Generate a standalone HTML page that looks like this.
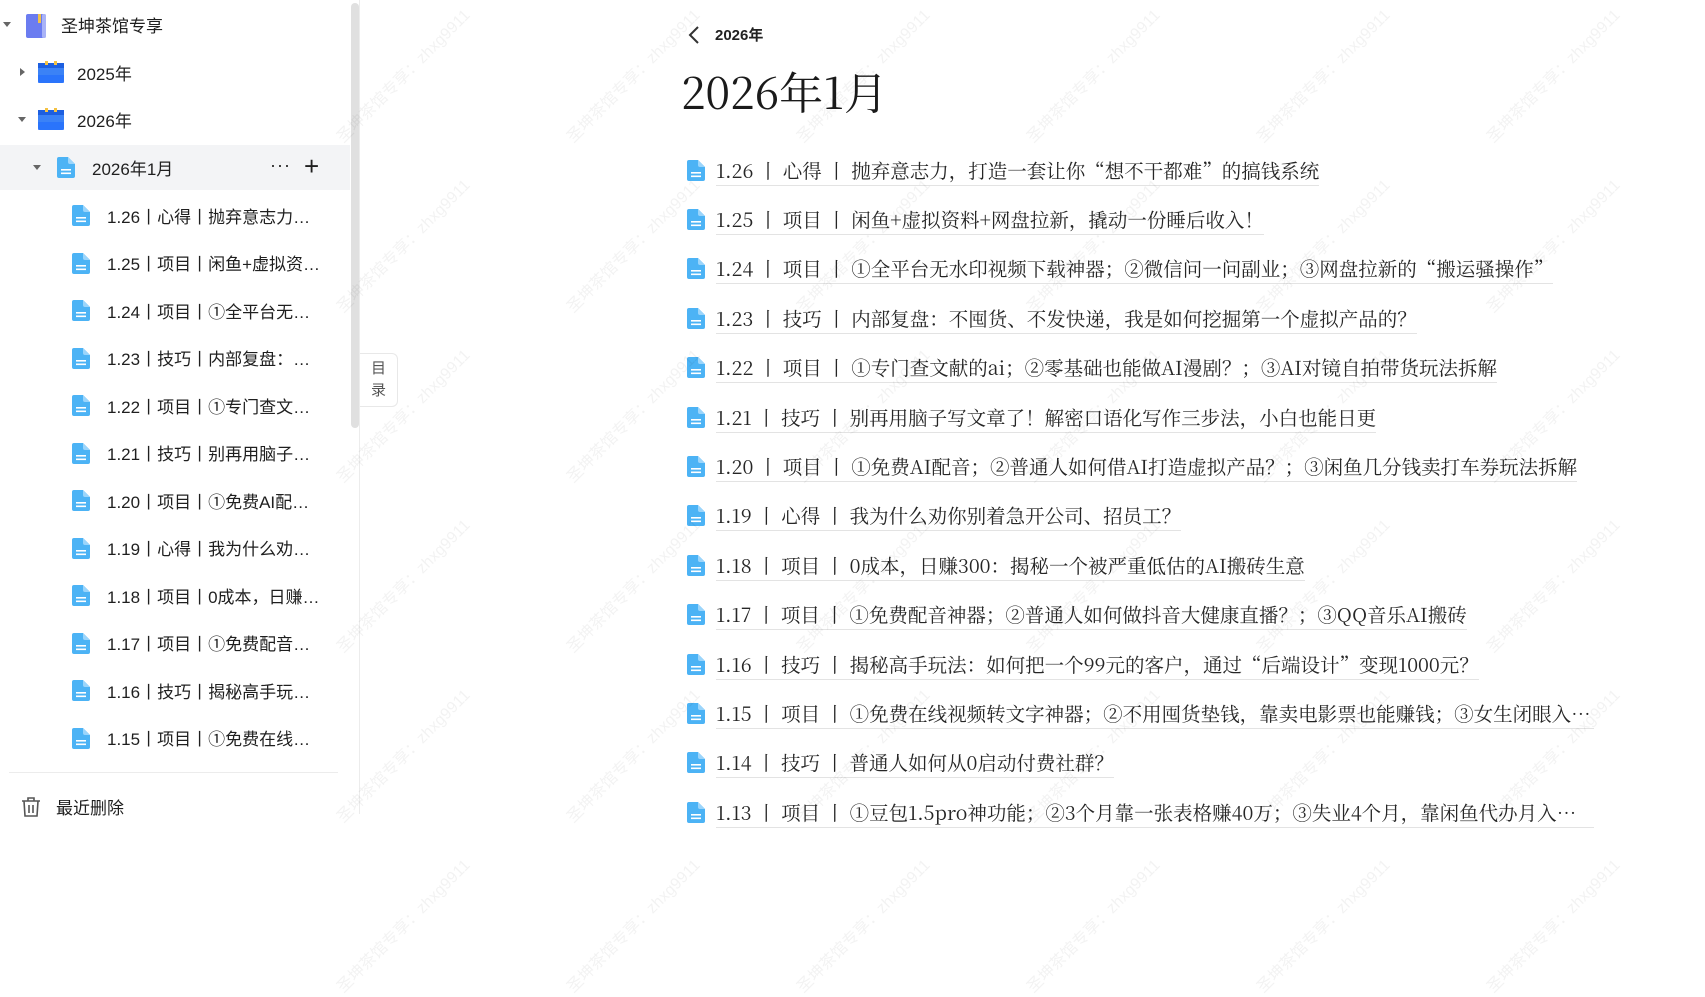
<!DOCTYPE html>
<html><head><meta charset="utf-8"><style>
*{margin:0;padding:0;box-sizing:border-box}
body{width:1705px;height:814px;overflow:hidden;background:#fff;position:relative;font-family:"Liberation Sans","Noto Sans CJK SC",sans-serif;color:#1f1f1f}
.side{position:absolute;left:0;top:0;width:360px;height:814px;border-right:1px solid #ececec}
.row{position:absolute;left:0;width:350px;height:46px;display:flex;align-items:center;font-size:17px;white-space:nowrap}
.row.hl{background:#f3f4f6}
.tri{position:absolute;width:0;height:0}
.down{border-left:4px solid transparent;border-right:4px solid transparent;border-top:5px solid #666}
.right{border-top:4px solid transparent;border-bottom:4px solid transparent;border-left:5px solid #666}
.sb{position:absolute;left:351px;top:3px;width:8px;height:425px;background:#e0e0e0;border-radius:4px}
.mulu{position:absolute;left:360px;top:353px;width:38px;height:54px;border:1px solid #e8e8e8;border-left:none;border-radius:0 6px 6px 0;background:#fff;font-size:15px;color:#555;text-align:center;line-height:22px;padding-top:4px}
.main .item{position:absolute;left:687px;height:30px;display:flex;align-items:center}
.main .txt{margin-left:11px;font-family:"Noto Serif CJK SC","Liberation Serif",serif;font-size:19.5px;color:#262626;border-bottom:1px solid #e3e3e3;line-height:30px;white-space:nowrap;max-width:878px;overflow:hidden;text-overflow:ellipsis}
.wm{position:absolute;font-size:16px;color:rgba(0,0,0,0.05);transform:rotate(-45deg);white-space:nowrap;transform-origin:left top}
</style></head><body>
<div class="side">
  <div class="row" style="top:1px"><div class="tri down" style="left:3px;top:21px"></div>
    <svg style="position:absolute;left:26px;top:13px" width="21" height="24" viewBox="0 0 21 24"><rect x="0" y="0" width="19" height="24" rx="2" fill="#6b7cf0"/><rect x="16" y="0" width="4" height="24" rx="1.5" fill="#a9b3f7"/><rect x="12" y="0" width="3" height="9" fill="#f3c24a"/></svg>
    <span style="position:absolute;left:61px">圣坤茶馆专享</span></div>
  <div class="row" style="top:49px"><div class="tri right" style="left:20px;top:19px"></div>
    <svg style="position:absolute;left:38px;top:12px" width="26" height="22" viewBox="0 0 26 22"><rect x="0" y="2" width="26" height="20" rx="2" fill="#3b82f6"/><rect x="0" y="2" width="26" height="5" fill="#1d5fe0"/><rect x="7" y="0" width="3" height="4" fill="#f5c242"/><rect x="16" y="0" width="3" height="4" fill="#f5c242"/><rect x="0" y="14" width="26" height="8" fill="#1a66ff" opacity=".5"/></svg>
    <span style="position:absolute;left:77px">2025年</span></div>
  <div class="row" style="top:96px"><div class="tri down" style="left:18px;top:21px"></div>
    <svg style="position:absolute;left:38px;top:12px" width="26" height="22" viewBox="0 0 26 22"><rect x="0" y="2" width="26" height="20" rx="2" fill="#3b82f6"/><rect x="0" y="2" width="26" height="5" fill="#1d5fe0"/><rect x="7" y="0" width="3" height="4" fill="#f5c242"/><rect x="16" y="0" width="3" height="4" fill="#f5c242"/><rect x="0" y="14" width="26" height="8" fill="#1a66ff" opacity=".5"/></svg>
    <span style="position:absolute;left:77px">2026年</span></div>
  <div class="row hl" style="top:145px;height:45px"><div class="tri down" style="left:33px;top:20px"></div>
    <svg style="position:absolute;left:57px;top:12px" width="18" height="21" viewBox="0 0 18 21"><path d="M2 0h9l7 7v12a2 2 0 0 1-2 2H2a2 2 0 0 1-2-2V2a2 2 0 0 1 2-2z" fill="#4cb3f5"/><path d="M11 0l7 7h-5a2 2 0 0 1-2-2z" fill="#9bd5fb"/><rect x="4" y="12" width="10" height="1.6" fill="#fff"/><rect x="4" y="15.5" width="10" height="1.6" fill="#fff"/></svg>
    <span style="position:absolute;left:92px">2026年1月</span>
    <span style="position:absolute;left:270px;top:10px;font-size:18px;letter-spacing:1px">···</span>
    <span style="position:absolute;left:304px;top:6px;font-size:26px;font-weight:300">+</span></div>
  <div id="kids"></div>
  <div style="position:absolute;left:9px;top:772px;width:329px;height:1px;background:#ececec"></div>
  <svg style="position:absolute;left:21px;top:797px" width="20" height="20" viewBox="0 0 20 20" fill="none" stroke="#555" stroke-width="1.6"><path d="M1 4h18M7 4V1h6v3M3 4l1 15h12l1-15M8 8v8M12 8v8"/></svg>
  <span style="position:absolute;left:56px;top:794px;font-size:17px">最近删除</span>
  <div class="sb"></div>
</div>
<div class="mulu">目<br>录</div>
<div class="main">
  <svg style="position:absolute;left:688px;top:25px" width="12" height="20" viewBox="0 0 12 20"><path d="M10 2L2 10l8 8" fill="none" stroke="#333" stroke-width="2"/></svg>
  <div style="position:absolute;left:715px;top:24px;font-size:15px;font-weight:bold;color:#222">2026年</div>
  <div style="position:absolute;left:681px;top:62px;font-size:44px;font-family:'Noto Serif CJK SC','Liberation Serif',serif;color:#1a1a1a;line-height:56px">2026年1月</div>
  <div id="list"></div>
</div>
<div id="wms"></div>
<script>
var doc='<svg width="18" height="21" viewBox="0 0 18 21"><path d="M2 0h9l7 7v12a2 2 0 0 1-2 2H2a2 2 0 0 1-2-2V2a2 2 0 0 1 2-2z" fill="#4cb3f5"/><path d="M11 0l7 7h-5a2 2 0 0 1-2-2z" fill="#9bd5fb"/><rect x="4" y="12" width="10" height="1.6" fill="#fff"/><rect x="4" y="15.5" width="10" height="1.6" fill="#fff"/></svg>';
var kids=["1.26丨心得丨抛弃意志力…","1.25丨项目丨闲鱼+虚拟资…","1.24丨项目丨①全平台无…","1.23丨技巧丨内部复盘：…","1.22丨项目丨①专门查文…","1.21丨技巧丨别再用脑子…","1.20丨项目丨①免费AI配…","1.19丨心得丨我为什么劝…","1.18丨项目丨0成本，日赚…","1.17丨项目丨①免费配音…","1.16丨技巧丨揭秘高手玩…","1.15丨项目丨①免费在线…"];
var h='';kids.forEach(function(t,i){var y=192+i*47.5;h+='<div class="row" style="top:'+y+'px"><span style="position:absolute;left:72px;top:13px">'+doc+'</span><span style="position:absolute;left:107px">'+t+'</span></div>';});
document.getElementById('kids').innerHTML=h;
var L=["1.26丨心得丨抛弃意志力，打造一套让你“想不干都难”的搞钱系统","1.25丨项目丨闲鱼+虚拟资料+网盘拉新，撬动一份睡后收入！","1.24丨项目丨①全平台无水印视频下载神器；②微信问一问副业；③网盘拉新的“搬运骚操作”","1.23丨技巧丨内部复盘：不囤货、不发快递，我是如何挖掘第一个虚拟产品的？","1.22丨项目丨①专门查文献的ai；②零基础也能做AI漫剧？；③AI对镜自拍带货玩法拆解","1.21丨技巧丨别再用脑子写文章了！解密口语化写作三步法，小白也能日更","1.20丨项目丨①免费AI配音；②普通人如何借AI打造虚拟产品？；③闲鱼几分钱卖打车券玩法拆解","1.19丨心得丨我为什么劝你别着急开公司、招员工？","1.18丨项目丨0成本，日赚300：揭秘一个被严重低估的AI搬砖生意","1.17丨项目丨①免费配音神器；②普通人如何做抖音大健康直播？；③QQ音乐AI搬砖","1.16丨技巧丨揭秘高手玩法：如何把一个99元的客户，通过“后端设计”变现1000元？","1.15丨项目丨①免费在线视频转文字神器；②不用囤货垫钱，靠卖电影票也能赚钱；③女生闭眼入的副业","1.14丨技巧丨普通人如何从0启动付费社群？","1.13丨项目丨①豆包1.5pro神功能；②3个月靠一张表格赚40万；③失业4个月，靠闲鱼代办月入过万元的经验"];
h='';L.forEach(function(t,i){var y=155+i*49.4;h+='<div class="item" style="top:'+y+'px">'+doc+'<span class="txt">'+t.replace(/丨/g,' 丨 ')+'</span></div>';});
document.getElementById('list').innerHTML=h;
h='';for(var r=0;r<6;r++)for(var c=0;c<7;c++){h+='<div class="wm" style="left:'+(330+c*230)+'px;top:'+(130+r*170)+'px">圣坤茶馆专享：zhxg9911</div>';}
document.getElementById('wms').innerHTML=h;
</script>
</body></html>
